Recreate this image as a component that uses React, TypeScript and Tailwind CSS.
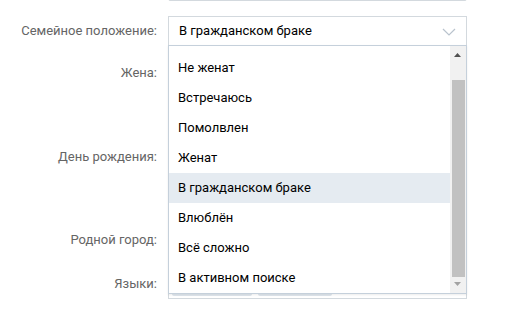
import React from "react";

const items = [
  "Не женат",
  "Встречаюсь",
  "Помолвлен",
  "Женат",
  "В гражданском браке",
  "Влюблён",
  "Всё сложно",
  "В активном поиске",
];

function Row({ label, top, children }: { label: string; top: string; children?: React.ReactNode }) {
  return (
    <div className={`flex items-center h-[30px] ${top}`}>
      <div className="w-[157px] text-right text-[#656565]">{label}</div>
      <div className="ml-[11px] w-[299px] h-[30px]">{children}</div>
    </div>
  );
}

export default function App() {
  return (
    <div className="relative w-[512px] h-[321px] overflow-hidden bg-white font-['Roboto',sans-serif] text-[13px] leading-[16px] text-black">
      <div className="flex -mt-[29px] h-[30px]">
        <div className="ml-[168px] w-[299px] h-[30px] border border-[#d3d9de] rounded-[2px]" />
      </div>
      <Row label="Семейное положение:" top="mt-[15px]">
        <div className="relative h-[30px] border border-[#d3d9de] flex items-center pl-[10px]">
          <span>В гражданском браке</span>
          <svg className="absolute right-[10px] top-[11px]" width="14" height="8" viewBox="0 0 14 8">
            <path d="M1 1 L7 7 L13 1" fill="none" stroke="#b9c3cd" strokeWidth="1.2" />
          </svg>
        </div>
      </Row>
      <Row label="Жена:" top="mt-[12px]">
        <div className="h-[30px] border border-[#d3d9de]" />
      </Row>
      <Row label="День рождения:" top="mt-[54px]">
        <div className="h-[30px] border border-[#d3d9de]" />
      </Row>
      <Row label="Родной город:" top="mt-[53px]">
        <div className="h-[30px] border border-[#d3d9de]" />
      </Row>
      <Row label="Языки:" top="mt-[14px]">
        <div className="h-[30px] border border-[#d3d9de] flex items-end gap-[6px] pl-[3px] pb-[2px]">
          <div className="w-[80px] h-[22px] bg-[#dfe6ed] rounded-[2px]" />
          <div className="w-[74px] h-[22px] bg-[#dfe6ed] rounded-[2px]" />
        </div>
      </Row>

      <div className="absolute left-[168px] top-[45px] w-[299px] h-[249px] bg-white border border-[#c5d0db] shadow-[0_1px_2px_rgba(0,0,0,0.08)]">
        <div className="pt-[7px] pr-[16px]">
          {items.map((t, i) => (
            <div
              key={t}
              className={`h-[30px] flex items-center pl-[9px] ${i === 4 ? "bg-[#e5ebf1]" : ""}`}
            >
              {t}
            </div>
          ))}
        </div>
        <div className="absolute right-0 top-0 bottom-0 w-[16px] bg-[#f1f1f1]">
          <svg className="absolute left-[4px] top-[7px]" width="7" height="4" viewBox="0 0 7 4">
            <path d="M0 4 L3.5 0 L7 4 Z" fill="#505050" />
          </svg>
          <div className="absolute left-[2px] right-[1px] top-[34px] h-[197px] bg-[#c1c1c1]" />
          <svg className="absolute left-[4px] bottom-[7px]" width="7" height="4" viewBox="0 0 7 4">
            <path d="M0 0 L7 0 L3.5 4 Z" fill="#a3a3a3" />
          </svg>
        </div>
      </div>
    </div>
  );
}
